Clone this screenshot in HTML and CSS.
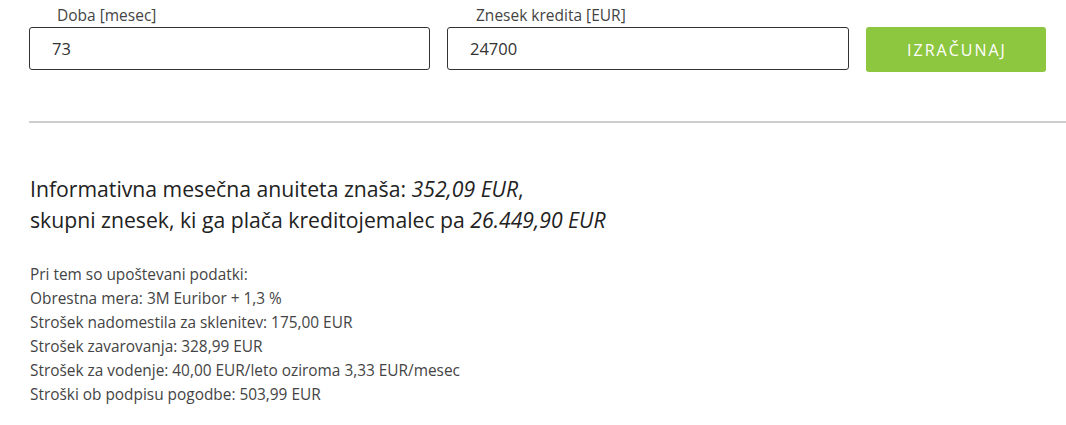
FILE: index.html
```html
<!DOCTYPE html>
<html lang="sl">
<head>
<meta charset="utf-8">
<title>Izračun kredita</title>
<link rel="stylesheet" href="styles.css">
</head>
<body>
<div class="calc">
  <div class="field field-period">
    <label class="field-label label-period" for="doba">Doba [mesec]</label>
    <input class="field-input" id="doba" type="text" value="73">
  </div>
  <div class="field field-amount">
    <label class="field-label label-amount" for="znesek">Znesek kredita [EUR]</label>
    <input class="field-input" id="znesek" type="text" value="24700">
  </div>
  <button class="calc-button" type="button">IZRAČUNAJ</button>
</div>
<hr class="divider">
<div class="result">
  <p class="result-main">Informativna mesečna anuiteta znaša: <em>352,09 EUR</em>,<br>skupni znesek, ki ga plača kreditojemalec pa <em>26.449,90 EUR</em></p>
  <p class="result-details">Pri tem so upoštevani podatki:<br>Obrestna mera: 3M Euribor + 1,3 %<br>Strošek nadomestila za sklenitev: 175,00 EUR<br>Strošek zavarovanja: 328,99 EUR<br>Strošek za vodenje: 40,00 EUR/leto oziroma 3,33 EUR/mesec<br>Stroški ob podpisu pogodbe: 503,99 EUR</p>
</div>
</body>
</html>
```
FILE: styles.css
```css
html, body {
  margin: 0;
  padding: 0;
  background: #fff;
}
body {
  font-family: "Open Sans", "Liberation Sans", sans-serif;
  color: #333;
}
.calc {
  display: flex;
  align-items: flex-end;
  gap: 17px;
  padding: 5px 20px 0 29px;
}
.field {
  display: flex;
  flex-direction: column;
}
.field-period { width: 401px; }
.field-amount { width: 402px; }
.field-label {
  font-size: 15.5px;
  line-height: 20px;
  color: #444;
  margin-bottom: 2px;
}
.label-period { padding-left: 28px; }
.label-amount { padding-left: 29px; }
.field-input {
  box-sizing: border-box;
  height: 43px;
  width: 100%;
  border: 1px solid #333;
  border-radius: 3px;
  padding: 0 0 0 22px;
  font-family: "Open Sans", "Liberation Sans", sans-serif;
  font-size: 16.5px;
  color: #333;
  background: #fff;
  outline: none;
}
.calc-button {
  box-sizing: border-box;
  width: 180px;
  height: 45px;
  margin-bottom: -2px;
  border: none;
  border-radius: 3px;
  background: #8dc63f;
  color: #fff;
  font-family: "Open Sans", "Liberation Sans", sans-serif;
  font-size: 16px;
  letter-spacing: 2px;
  padding: 0 0 0 2px;
  cursor: pointer;
}
.divider {
  border: none;
  height: 2px;
  background: #cdcdcd;
  margin: 51px 0 0 29px;
}
.result {
  padding: 0 20px 0 30px;
}
.result-main {
  margin: 50px 0 0;
  font-size: 21.2px;
  line-height: 31px;
  color: #222;
}
.result-main em {
  font-style: italic;
}
.result-details {
  margin: 28px 0 0;
  font-size: 15.4px;
  line-height: 24px;
  color: #444;
}
```
